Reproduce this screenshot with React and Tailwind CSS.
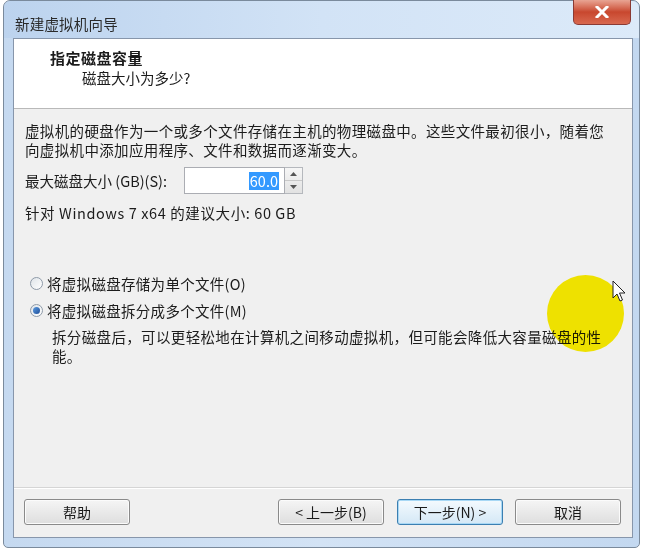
import React from "react";

const F = { fontFamily: '"Noto Sans CJK SC", "Noto Sans", sans-serif' };

function Btn({ children, primary, className = "" }) {
  return (
    <div
      className={
        "h-[26px] w-[106px] flex items-center justify-center rounded-[3px] border text-[14px] text-[#1a1a1a] " +
        (primary
          ? "border-[#3c7fb1] bg-gradient-to-b from-[#f4fafe] to-[#d4e8f6] shadow-[inset_0_0_0_1px_#a8d8f5] "
          : "border-[#8a8a8a] bg-gradient-to-b from-[#f5f5f5] to-[#dedede] shadow-[inset_0_0_0_1px_#fbfbfb] ") +
        className
      }
    >
      {children}
    </div>
  );
}

function Radio({ checked }) {
  return (
    <div className="w-[13px] h-[13px] rounded-full border border-[#8e9aa8] bg-gradient-to-br from-[#dfe4e9] to-[#ffffff] flex items-center justify-center">
      {checked && <div className="w-[7px] h-[7px] rounded-full bg-gradient-to-br from-[#5c9be0] to-[#1f4e9a]" />}
    </div>
  );
}

export default function App() {
  return (
    <div className="relative w-[660px] h-[551px] bg-white overflow-hidden" style={F}>
      <div className="ml-[3px] w-[637px] h-[548px] rounded-t-[7px] rounded-b-[5px] border border-[#7a8a9c] bg-gradient-to-r from-[#c5d9f0] via-[#d3e3f5] to-[#c3d8f0] flex flex-col">
        {/* title bar */}
        <div className="h-[37px] flex items-center pl-[11px] pt-[9px] text-[14.5px] text-[#2a2a2a] tracking-[0.2px] bg-gradient-to-r from-[#bcd3ee] via-[#d2e3f6] to-[#dceaf9] rounded-t-[7px]">
          新建虚拟机向导
        </div>
        {/* content */}
        <div className="ml-[9px] w-[620px] h-[500px] border border-[#8796ab] bg-[#f0f0f0] flex flex-col text-[14.5px] text-[#1c1c1c] leading-[19px]">
          <div className="h-[70px] bg-white border-b border-[#b9b9b9] pl-[36px] pt-[9px]">
            <div className="font-bold text-[15px] leading-[20px] tracking-[0.5px]">指定磁盘容量</div>
            <div className="pl-[32px] leading-[19px] mt-[0px]">磁盘大小为多少?</div>
          </div>
          <div className="pl-[11px] pt-[12px] flex-1 flex flex-col">
            <div className="tracking-[0.35px] whitespace-nowrap">
              <div>虚拟机的硬盘作为一个或多个文件存储在主机的物理磁盘中。这些文件最初很小，随着您</div>
              <div>向虚拟机中添加应用程序、文件和数据而逐渐变大。</div>
            </div>
            <div className="mt-[8px] flex items-center h-[27px]">
              <span className="w-[159px] whitespace-nowrap">最大磁盘大小 (GB)(S):</span>
              <div className="h-[27px] w-[101px] border border-[#abadb3] bg-white flex items-center justify-end pr-[5px]">
                <span className="bg-[#3399ff] text-white leading-[18px] px-[1px]">60.0</span>
              </div>
              <div className="h-[27px] w-[18px] border border-l-0 border-[#b5b8bd] bg-gradient-to-b from-[#f6f6f6] to-[#e2e2e2] flex flex-col">
                <div className="flex-1 flex items-center justify-center border-b border-[#c8c8c8]">
                  <svg width="7" height="4" viewBox="0 0 7 4"><path d="M0 4 L3.5 0 L7 4Z" fill="#555" /></svg>
                </div>
                <div className="flex-1 flex items-center justify-center">
                  <svg width="7" height="4" viewBox="0 0 7 4"><path d="M0 0 L3.5 4 L7 0Z" fill="#555" /></svg>
                </div>
              </div>
            </div>
            <div className="mt-[9px] tracking-[0.6px] whitespace-nowrap">针对 Windows 7 x64 的建议大小: 60 GB</div>
            <div className="mt-[52px] flex items-center gap-[4px] pl-[5px] tracking-[0.3px]">
              <Radio />
              <span>将虚拟磁盘存储为单个文件(O)</span>
            </div>
            <div className="mt-[8px] flex items-center gap-[4px] pl-[5px] tracking-[0.3px]">
              <Radio checked />
              <span>将虚拟磁盘拆分成多个文件(M)</span>
            </div>
            <div className="mt-[7px] pl-[27px] leading-[19px] tracking-[0.35px] whitespace-nowrap">
              <div>拆分磁盘后，可以更轻松地在计算机之间移动虚拟机，但可能会降低大容量磁盘的性</div>
              <div>能。</div>
            </div>
          </div>
          <div className="h-[50px] border-t border-[#d5d5d5] shadow-[inset_0_1px_0_#ffffff] flex items-start pt-[11px] pl-[10px] pr-[11px]">
            <Btn>帮助</Btn>
            <Btn className="ml-auto">&lt; 上一步(B)</Btn>
            <Btn primary className="ml-[13px]">下一步(N) &gt;</Btn>
            <Btn className="ml-[12px]">取消</Btn>
          </div>
        </div>
      </div>

      {/* close button */}
      <div className="absolute left-[573px] top-0 w-[58px] h-[25px] rounded-b-[5px] border border-[#8a3a34] border-t-0 bg-gradient-to-b from-[#e8a493] via-[#c8472e] to-[#d8684f] flex items-center justify-center">
        <svg width="14" height="12" viewBox="0 0 14 12">
          <path d="M2 1 L12 11 M12 1 L2 11" stroke="#ffffff" strokeWidth="3" strokeLinecap="square" />
        </svg>
      </div>

      {/* highlight circle */}
      <div className="absolute left-[547px] top-[275px] w-[77px] h-[77px] rounded-full bg-[#fdf000] mix-blend-multiply" />

      {/* cursor */}
      <svg className="absolute left-[612px] top-[280px]" width="16" height="24" viewBox="0 0 16 24">
        <path d="M1 1 L1 18 L5 14 L8 21 L10.5 20 L7.5 13 L13 13 Z" fill="#ffffff" stroke="#222" strokeWidth="1" strokeLinejoin="round" />
      </svg>
    </div>
  );
}
